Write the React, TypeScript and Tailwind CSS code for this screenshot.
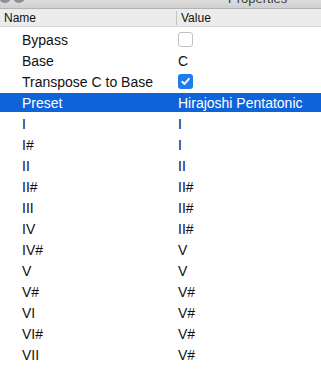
import React from "react";

function Unchecked() {
  return (
    <div className="w-[15px] h-[15px] rounded-[3px] border border-[#c2c2c2] bg-white" />
  );
}

function Checked() {
  return (
    <div className="w-[15px] h-[15px] rounded-[3px] bg-[#1e7cf2] flex items-center justify-center">
      <svg width="11" height="11" viewBox="0 0 11 11">
        <path d="M2.2 5.8 L4.5 8 L8.9 2.8" fill="none" stroke="white" strokeWidth="1.9" strokeLinecap="round" strokeLinejoin="round" />
      </svg>
    </div>
  );
}

export default function App() {
  const data: { name: string; value: React.ReactNode; selected?: boolean }[] = [
    { name: "Bypass", value: <Unchecked /> },
    { name: "Base", value: "C" },
    { name: "Transpose C to Base", value: <Checked /> },
    { name: "Preset", value: "Hirajoshi Pentatonic", selected: true },
    { name: "I", value: "I" },
    { name: "I#", value: "I" },
    { name: "II", value: "II" },
    { name: "II#", value: "II#" },
    { name: "III", value: "II#" },
    { name: "IV", value: "II#" },
    { name: "IV#", value: "V" },
    { name: "V", value: "V" },
    { name: "V#", value: "V#" },
    { name: "VI", value: "V#" },
    { name: "VI#", value: "V#" },
    { name: "VII", value: "V#" },
  ];
  return (
    <div
      className="w-[321px] h-[375px] bg-white overflow-hidden flex flex-col"
      style={{ fontFamily: '"Liberation Sans", Arial, sans-serif' }}
    >
      {/* title bar */}
      <div className="relative h-[9px] shrink-0 bg-gradient-to-b from-[#dcdcdc] to-[#d0d0d0] border-b border-[#b3b3b3] overflow-hidden">
        <div className="absolute left-[-1px] top-[-9px] w-[12px] h-[12px] rounded-full bg-[#8f8f8f]" />
        <div className="absolute left-[13px] top-[-9px] w-[12px] h-[12px] rounded-full bg-[#8f8f8f]" />
        <div className="absolute left-[228px] top-[-8px] text-[13px] leading-[14px] text-[#3a3a3a]">Properties</div>
      </div>
      {/* header */}
      <div className="h-[18px] shrink-0 bg-[#ececec] border-b border-[#d6d6d6] flex items-center text-[12px] text-[#111]">
        <div className="w-[176px] pl-[4px] leading-none">Name</div>
        <div className="w-px h-[14px] bg-[#c4c4c4]" />
        <div className="pl-[4px] leading-none">Value</div>
      </div>
      <div className="h-[2px] shrink-0" />
      {/* rows */}
      <div className="flex flex-col">
        {data.map((r, i) => (
          <div key={i} className="h-[21px] py-px">
            <div
              className={
                "h-[19px] flex items-center text-[14px] leading-none " +
                (r.selected ? "bg-[#0f63d8] text-white" : "text-[#111]")
              }
            >
              <div className="w-[178px] pl-[22px] whitespace-nowrap">{r.name}</div>
              <div className="whitespace-nowrap">{r.value}</div>
            </div>
          </div>
        ))}
      </div>
    </div>
  );
}
